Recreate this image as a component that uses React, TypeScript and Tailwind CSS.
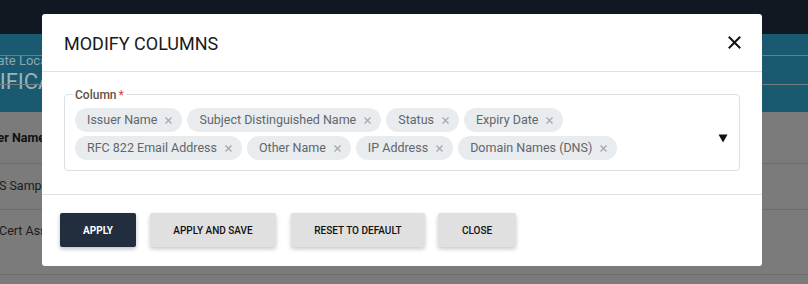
import React from "react";

const chipsRow1 = ["Issuer Name", "Subject Distinguished Name", "Status", "Expiry Date"];
const chipsRow2 = ["RFC 822 Email Address", "Other Name", "IP Address", "Domain Names (DNS)"];

function Chip({ label }: { label: string }) {
  return (
    <div className="flex h-[24px] items-center rounded-full bg-[#e9ecef] pl-[12px] pr-[10px] text-[12.5px] text-[#62666a]">
      <span>{label}</span>
      <svg width="7" height="7" viewBox="0 0 7 7" className="ml-[8px]">
        <path d="M0.5 0.5 L6.5 6.5 M6.5 0.5 L0.5 6.5" stroke="#a3a7ab" strokeWidth="1.2" />
      </svg>
    </div>
  );
}

export default function App() {
  return (
    <div className="relative h-[284px] w-[808px] overflow-hidden bg-[#7b7b7b] font-['Roboto',sans-serif]">
      {/* Background page (dimmed) */}
      <div className="h-[34px] bg-[#121821]" />
      <div className="flex h-[78px] flex-col bg-[#1a5a70]">
        <div className="h-[22px] border-b border-[#6f7d82]" />
        <div className="ml-[-44px] mt-[-4px] whitespace-nowrap text-[13px] leading-[18px] text-[#8ea5ad]">Certificate Locations</div>
        <div className="ml-[-53px] whitespace-nowrap text-[22px] leading-[24px] text-[#9fb0b6]">CERTIFICATES</div>
        <div className="mt-[-10px] h-[1px] bg-[#6f7d82]" />
      </div>
      <div className="flex flex-col">
        <div className="flex h-[52px] items-center border-b border-[#6c6c6c] pt-[1px]">
          <span className="ml-[-26px] whitespace-nowrap text-[12.5px] font-bold text-[#111]">Issuer Name</span>
        </div>
        <div className="flex h-[46px] items-center border-b border-[#6c6c6c]">
          <span className="ml-[-9px] whitespace-nowrap text-[12.5px] text-[#1c1c1c]">PS Sample</span>
        </div>
        <div className="flex h-[65px] items-start border-b border-[#6c6c6c] pt-[12px]">
          <span className="ml-[-1px] whitespace-nowrap text-[12.5px] text-[#1c1c1c]">Cert Assets</span>
        </div>
      </div>

      {/* Modal */}
      <div className="absolute left-[42px] top-[14px] flex h-[252px] w-[720px] flex-col rounded-[3px] bg-white">
        <div className="flex h-[58px] items-center justify-between border-b border-[#dee2e6] pl-[22px] pr-[21px]">
          <h2 className="pt-[1px] text-[18px] text-[#1a1a1a]">MODIFY COLUMNS</h2>
          <svg width="13" height="13" viewBox="0 0 13 13" className="mt-[-1px]">
            <path d="M1.5 1.5 L11.5 11.5 M11.5 1.5 L1.5 11.5" stroke="#111" strokeWidth="2" strokeLinecap="square" />
          </svg>
        </div>
        <div className="h-[123px] border-b border-[#dee2e6] px-[22px] pt-[22px]">
          <div className="relative rounded-[4px] border border-[#dcdfe3] pb-[10px] pl-[10px] pr-[40px] pt-[13px]">
            <div className="absolute left-[8px] top-[-7px] flex items-center bg-white px-[2px] text-[12px] font-medium leading-[14px] text-[#5e5344]">
              Column<span className="ml-[2px] text-[#d9534f]">*</span>
            </div>
            <div className="flex flex-col gap-[4px]">
              <div className="flex gap-[5px]">
                {chipsRow1.map((c) => (
                  <Chip key={c} label={c} />
                ))}
              </div>
              <div className="flex gap-[5px]">
                {chipsRow2.map((c) => (
                  <Chip key={c} label={c} />
                ))}
              </div>
            </div>
            <svg width="10" height="9" viewBox="0 0 10 9" className="absolute right-[11px] top-[39px]">
              <path d="M0.5 0.5 H9.5 L5 8.5 Z" fill="#111" />
            </svg>
          </div>
        </div>
        <div className="flex flex-1 items-start pl-[18px] pt-[18px]">
          <button className="h-[34px] w-[76px] rounded-[2px] bg-[#222d3e] text-[10px] font-bold text-white shadow-[0_2px_4px_rgba(0,0,0,0.25)]">
            APPLY
          </button>
          <button className="ml-[14px] h-[34px] w-[126px] rounded-[2px] bg-[#e0e0e0] text-[10px] font-medium text-[#111] shadow-[0_2px_4px_rgba(0,0,0,0.22)]">
            APPLY AND SAVE
          </button>
          <button className="ml-[15px] h-[34px] w-[134px] rounded-[2px] bg-[#e0e0e0] text-[10px] font-medium text-[#111] shadow-[0_2px_4px_rgba(0,0,0,0.22)]">
            RESET TO DEFAULT
          </button>
          <button className="ml-[13px] h-[34px] w-[78px] rounded-[2px] bg-[#e0e0e0] text-[10px] font-medium text-[#111] shadow-[0_2px_4px_rgba(0,0,0,0.22)]">
            CLOSE
          </button>
        </div>
      </div>
    </div>
  );
}
